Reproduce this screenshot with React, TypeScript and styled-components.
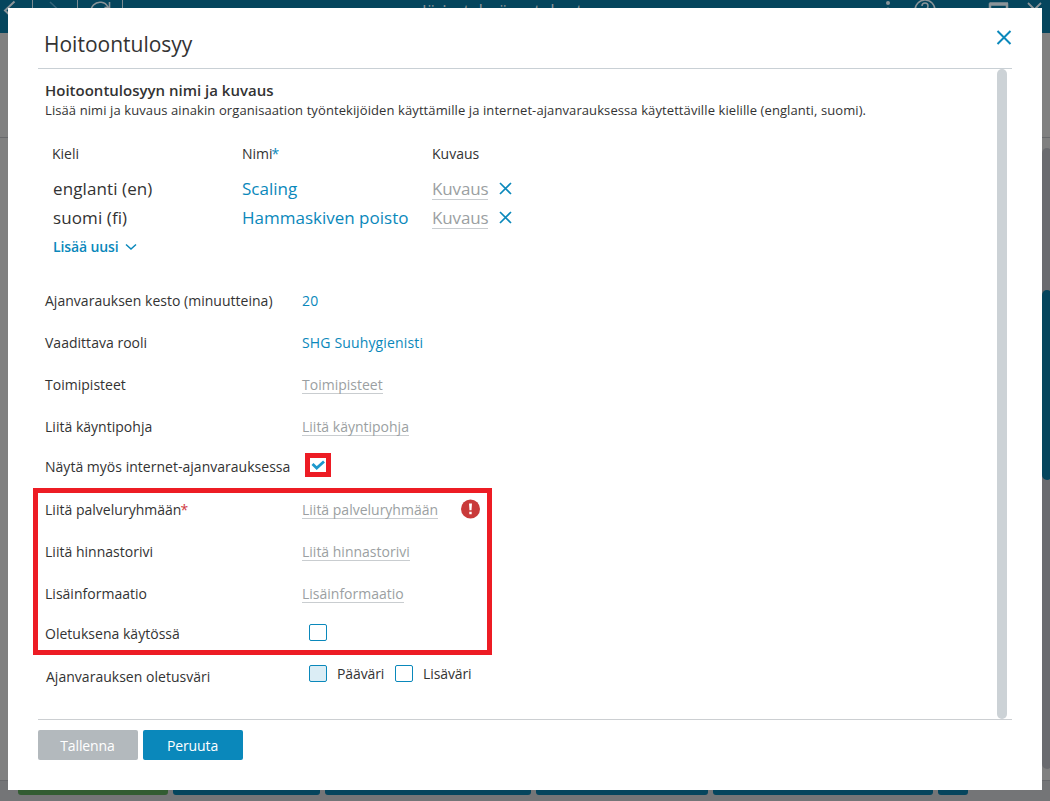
import React from "react";
import styled, { createGlobalStyle } from "styled-components";

const GlobalStyle = createGlobalStyle`
  * {
    box-sizing: border-box;
  }

  body {
    margin: 0;
    overflow: hidden;
    font-family: "Open Sans", "Noto Sans", sans-serif;
    font-size: 14px;
    color: #333;
  }
`;

const Page = styled.div`
  position: relative;
  display: flex;
  flex-direction: column;
  width: 1050px;
  height: 801px;
  overflow: hidden;
  background: #808080;
`;

const TopBar = styled.header`
  display: flex;
  flex: none;
  height: 33px;
  background: #05455d;
  color: #8b9499;
`;

const NavCell = styled.div<{ $width: number }>`
  flex: none;
  width: ${(p) => p.$width}px;
  height: 33px;
  border-right: 1px solid #7c8b92;
`;

const TopTitle = styled.div`
  flex: none;
  width: 200px;
  margin-left: 299px;
  padding-top: 1px;
  font-size: 17.5px;
  line-height: 20px;
  letter-spacing: -0.45px;
  white-space: nowrap;
`;

const TopIcons = styled.svg`
  flex: none;
  margin-left: 257px;
`;

const Workspace = styled.div`
  display: flex;
  flex: 1;
  flex-direction: column;
`;

const Toolbar = styled.div`
  height: 105px;
  border-bottom: 1px solid #68696c;
`;

const PageScroll = styled.div`
  align-self: flex-end;
  width: 10px;
  height: 621px;
  margin: 10px -2px 0 0;
  padding-top: 142px;
  border-radius: 5px;
  background: #6a6b6f;
`;

const PageThumb = styled.div`
  height: 190px;
  border-radius: 5px;
  background: #05455d;
`;

const BottomBar = styled.footer`
  display: flex;
  flex: none;
  gap: 5px;
  height: 21px;
  padding-left: 18px;
  border-top: 1px solid #68696c;
  background: #747577;
`;

const BottomButton = styled.div<{ $width: number; $green?: boolean }>`
  width: ${(p) => p.$width}px;
  height: 14px;
  border-radius: 0 0 3px 3px;
  background: ${(p) => (p.$green ? "#325c32" : "#05455d")};
`;

const Modal = styled.div`
  position: absolute;
  top: 8px;
  left: 8px;
  width: 1034px;
  height: 782px;
  padding: 0 30px;
  background: #fff;
`;

const ModalHeader = styled.div`
  display: flex;
  justify-content: space-between;
  height: 61px;
  padding-left: 6px;
  border-bottom: 1px solid #c9d0d5;
`;

const ModalTitle = styled.h1`
  margin: 0;
  padding-top: 21px;
  font-size: 21px;
  font-weight: 400;
  line-height: 30px;
`;

const CloseIcon = styled.svg`
  margin-top: 22px;
`;

const ModalBody = styled.div`
  display: flex;
  justify-content: space-between;
  height: 651px;
  border-bottom: 1px solid #cccfd2;
`;

const Content = styled.div`
  width: 900px;
  padding: 11px 0 0 7px;
`;

const Scrollbar = styled.div`
  width: 10px;
  height: 650px;
  margin-right: 5px;
  border-radius: 5px;
  background: #ccd2d6;
`;

const Heading = styled.h2`
  margin: 0;
  font-size: 15px;
  font-weight: 600;
  line-height: 21px;
`;

const Description = styled.p`
  margin: 0;
  font-size: 13px;
  line-height: 19px;
  letter-spacing: 0.095px;
  white-space: nowrap;
`;

const LanguageGrid = styled.div`
  display: grid;
  grid-template-columns: 190px 190px 300px;
  grid-template-rows: 20px 11px;
  grid-auto-rows: 29px;
  align-items: center;
  margin-top: 23px;
  padding-left: 7px;
`;

const Gap = styled.div`
  grid-column: 1 / -1;
`;

const Language = styled.div`
  padding-left: 1px;
  font-size: 17px;
  letter-spacing: 0.1px;
`;

const Name = styled.div`
  font-size: 17px;
  color: #0a88bb;
`;

const DescriptionCell = styled.div`
  display: flex;
  align-items: center;
  gap: 10.5px;
`;

const Placeholder = styled.span<{ $large?: boolean }>`
  display: block;
  height: ${(p) => (p.$large ? 23 : 19)}px;
  border-bottom: 1px solid #c9cdd0;
  font-size: ${(p) => (p.$large ? 17 : 14)}px;
  line-height: ${(p) => (p.$large ? 23 : 19)}px;
  letter-spacing: ${(p) => (p.$large ? -0.15 : 0)}px;
  color: #9b9fa2;
`;

const AddNew = styled.div`
  display: flex;
  align-items: center;
  gap: 6px;
  padding-left: 1px;
  font-weight: 600;
  letter-spacing: -0.12px;
  color: #0a88bb;
`;

const Star = styled.span<{ $red?: boolean }>`
  margin-left: -1px;
  color: ${(p) => (p.$red ? "#d0393e" : "#0a88bb")};
`;

const Form = styled.div`
  margin-top: 18px;
`;

const Row = styled.div<{ $short?: boolean; $indent?: boolean }>`
  display: flex;
  align-items: center;
  height: ${(p) => (p.$short ? 38 : 42)}px;
  text-indent: ${(p) => (p.$indent ? 1 : 0)}px;
`;

const Label = styled.div`
  flex: none;
  width: 257px;
  letter-spacing: 0.02px;
  white-space: nowrap;
`;

const Value = styled.span`
  letter-spacing: 0.15px;
  color: #0a88bb;
`;

const Highlight = styled.div`
  width: 459px;
  height: 167px;
  margin: 3px 0 0 -12px;
  padding-left: 7px;
  border: 5px solid #ed1c24;

  > :first-child {
    margin-top: -5px;
  }
`;

const CheckHighlight = styled.div`
  display: flex;
  align-items: center;
  justify-content: center;
  width: 26px;
  height: 24px;
  margin: -2px 0 0 3px;
  border: 5px solid #ed1c24;
`;

const Checkbox = styled.div<{ $filled?: boolean }>`
  width: 18px;
  height: 17px;
  border: 1px solid #0a88bb;
  border-radius: 2px;
  background: ${(p) => (p.$filled ? "#dbedf5" : "#fff")};
`;

const CheckCell = styled.div`
  margin: -1px 0 0 7px;
`;

const ColorOptions = styled.div`
  display: flex;
  align-items: center;
  margin: -5px 0 0 7px;
  text-indent: 0;
`;

const ColorName = styled.span`
  width: 58px;
  margin-left: 10px;
  letter-spacing: -0.1px;
`;

const ErrorIcon = styled.svg`
  margin-left: 22px;
`;

const Actions = styled.div`
  display: flex;
  gap: 5px;
  padding-top: 10px;
`;

const Button = styled.button<{ $disabled?: boolean }>`
  width: 100px;
  height: 30px;
  padding: 1px 1px 0 0;
  border: 0;
  border-radius: 2px;
  background: ${(p) => (p.$disabled ? "#b3b9bd" : "#0a88bb")};
  color: #fff;
  font-family: inherit;
  font-size: 14px;
  letter-spacing: -0.1px;
`;

const RemoveIcon = () => (
  <svg width="13" height="13" viewBox="0 0 13 13">
    <path d="M1 1l11 11M12 1L1 12" stroke="#0a88bb" strokeWidth="1.7" />
  </svg>
);

const languages = [
  { language: "englanti (en)", name: "Scaling" },
  { language: "suomi (fi)", name: "Hammaskiven poisto" },
];

const App: React.FC = () => {
  return (
    <Page>
      <GlobalStyle />
      <TopBar>
        <NavCell $width={33}>
          <svg width="32" height="33" fill="none" stroke="#8b9499" strokeWidth="2">
            <path d="M14.500 1.500L5 10.500l9 8.500" />
          </svg>
        </NavCell>
        <NavCell $width={45}>
          <svg width="44" height="33" fill="none" stroke="#35647a" strokeWidth="1.6">
            <path d="M17 2l9 8.500-9 8.500" />
          </svg>
        </NavCell>
        <NavCell $width={45}>
          <svg width="44" height="33" fill="none" stroke="#8b9499" strokeWidth="1.6">
            <path d="M30 7A9 9 0 1 0 31 12M31.500 2v5.500h-5" />
          </svg>
        </NavCell>
        <TopTitle>Järjestelmäasetukset</TopTitle>
        <TopIcons width="171" height="33" fill="none" stroke="#8b9499" strokeWidth="1.5">
          <circle cx="9" cy="3" r="2" fill="#8b9499" stroke="none" />
          <circle cx="9" cy="9.500" r="2" fill="#8b9499" stroke="none" />
          <circle cx="46" cy="10" r="10" />
          <path d="M43 6q0-3 3-3t3 3-3 4v2" />
          <path d="M111 18V4.500h17V18M110.500 3.500h18.500" strokeWidth="2.500" />
          <path d="M149 3l13 13M162 3l-13 13" strokeWidth="1.800" />
        </TopIcons>
      </TopBar>
      <Workspace>
        <Toolbar />
        <PageScroll>
          <PageThumb />
        </PageScroll>
      </Workspace>
      <BottomBar>
        <BottomButton $width={150} $green />
        <BottomButton $width={147} />
        <BottomButton $width={206} />
        <BottomButton $width={172} />
        <BottomButton $width={220} />
        <BottomButton $width={30} />
      </BottomBar>

      <Modal>
        <ModalHeader>
          <ModalTitle>Hoitoontulosyy</ModalTitle>
          <CloseIcon width="16" height="16" viewBox="0 0 16 16">
            <path d="M1.500 1l13 13M14.500 1l-13 13" stroke="#0a88bb" strokeWidth="2" />
          </CloseIcon>
        </ModalHeader>
        <ModalBody>
          <Content>
            <Heading>Hoitoontulosyyn nimi ja kuvaus</Heading>
            <Description>
              Lisää nimi ja kuvaus ainakin organisaation työntekijöiden
              käyttämille ja internet-ajanvarauksessa käytettäville kielille
              (englanti, suomi).
            </Description>
            <LanguageGrid>
              <div>Kieli</div>
              <div>
                Nimi<Star>*</Star>
              </div>
              <div>Kuvaus</div>
              <Gap />
              {languages.map((item) => (
                <React.Fragment key={item.language}>
                  <Language>{item.language}</Language>
                  <Name>{item.name}</Name>
                  <DescriptionCell>
                    <Placeholder $large>Kuvaus</Placeholder>
                    <RemoveIcon />
                  </DescriptionCell>
                </React.Fragment>
              ))}
              <AddNew>
                Lisää uusi
                <svg width="12" height="8" viewBox="0 0 12 8">
                  <path d="M1 1.500l5 4.500 5-4.500" fill="none" stroke="#0a88bb" strokeWidth="1.5" />
                </svg>
              </AddNew>
            </LanguageGrid>
            <Form>
              <Row>
                <Label>Ajanvarauksen kesto (minuutteina)</Label>
                <Value>20</Value>
              </Row>
              <Row>
                <Label>Vaadittava rooli</Label>
                <Value>SHG Suuhygienisti</Value>
              </Row>
              <Row>
                <Label>Toimipisteet</Label>
                <Placeholder>Toimipisteet</Placeholder>
              </Row>
              <Row>
                <Label>Liitä käyntipohja</Label>
                <Placeholder>Liitä käyntipohja</Placeholder>
              </Row>
              <Row $short>
                <Label>Näytä myös internet-ajanvarauksessa</Label>
                <CheckHighlight>
                  <svg width="16" height="14" viewBox="0 0 16 14">
                    <path d="M2.500 6l4.200 4L14 3.500" fill="none" stroke="#1c98cc" strokeWidth="2.800" />
                  </svg>
                </CheckHighlight>
              </Row>
              <Highlight>
                <Row>
                  <Label>
                    Liitä palveluryhmään<Star $red>*</Star>
                  </Label>
                  <Placeholder>Liitä palveluryhmään</Placeholder>
                  <ErrorIcon width="20" height="20" viewBox="0 0 20 20">
                    <circle cx="10.500" cy="10" r="9.500" fill="#c93a3a" />
                    <path d="M9 4.500h3l-.5 6.700h-2zM9.300 12.800h2.400v2.400H9.300z" fill="#fff" />
                  </ErrorIcon>
                </Row>
                <Row>
                  <Label>Liitä hinnastorivi</Label>
                  <Placeholder>Liitä hinnastorivi</Placeholder>
                </Row>
                <Row>
                  <Label>Lisäinformaatio</Label>
                  <Placeholder>Lisäinformaatio</Placeholder>
                </Row>
                <Row $short>
                  <Label>Oletuksena käytössä</Label>
                  <CheckCell>
                    <Checkbox />
                  </CheckCell>
                </Row>
              </Highlight>
              <Row $indent>
                <Label>Ajanvarauksen oletusväri</Label>
                <ColorOptions>
                  <Checkbox $filled />
                  <ColorName>Pääväri</ColorName>
                  <Checkbox />
                  <ColorName>Lisäväri</ColorName>
                </ColorOptions>
              </Row>
            </Form>
          </Content>
          <Scrollbar />
        </ModalBody>
        <Actions>
          <Button $disabled>Tallenna</Button>
          <Button>Peruuta</Button>
        </Actions>
      </Modal>
    </Page>
  );
};

export default App;
